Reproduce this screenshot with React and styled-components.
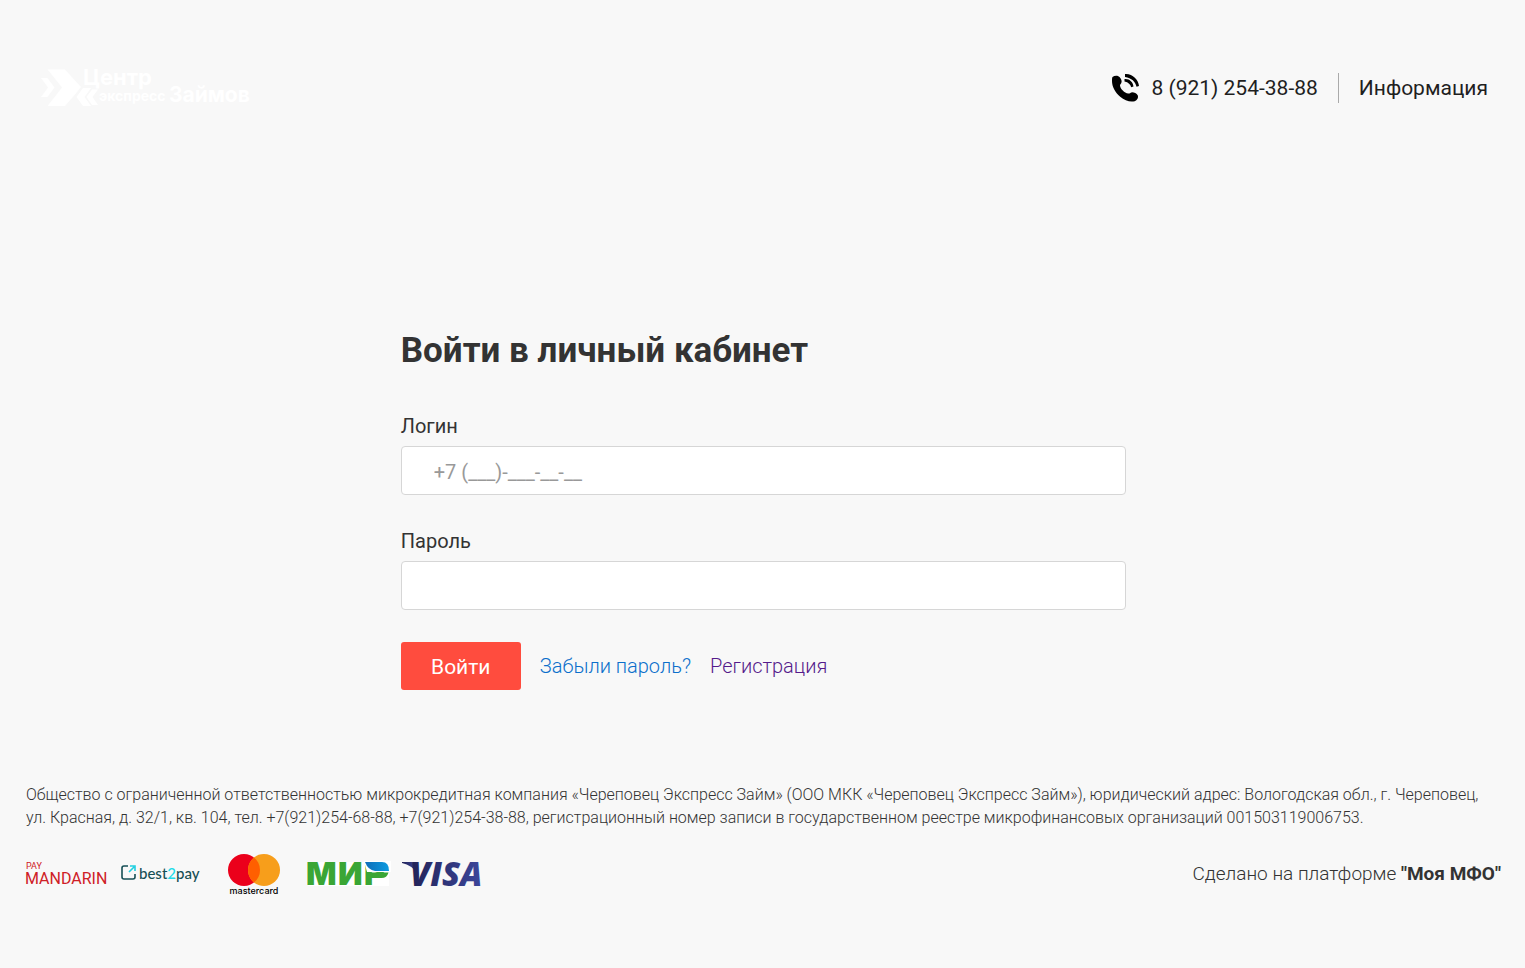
import React, { useState } from 'react'
import styled, { createGlobalStyle } from 'styled-components';

const GlobalStyle = createGlobalStyle`
    :root {
        --bg: #f8f8f8;
        --text: #333;
        --dark: #1f1f1f;
        --link: #0b6fcb;
        --visited: #551a8b;
        --accent: #ff4c3e;
        --border: #d6d6d6;
        --fz-sm: 16px;
        --fz-md: 20px;
        --fz-big: 35px;
    }
    * { box-sizing: border-box; }
    body {
        margin: 0;
        background: var(--bg);
        color: var(--text);
        font-family: Roboto, sans-serif;
        font-size: var(--fz-md);
        font-weight: 300;
    }
    svg {
        display: block;
        overflow: visible;
    }
`;

// Header
const Header = styled.header`
    display: flex;
    align-items: center;
    justify-content: space-between;
    padding: 64px 37px 0 40px;
`;
const LogoLink = styled.a`
    display: block;
    height: 48px;
`;
const HeaderNav = styled.nav`
    display: flex;
    align-items: center;
`;
const HeaderLink = styled.a`
    display: flex;
    align-items: center;
    gap: 12px;
    font-size: 21px;
    font-weight: 400;
    line-height: 30px;
    color: var(--dark);
    text-decoration: none;
    & + & {
        margin-left: 20px;
        padding-left: 20px;
        border-left: 1px solid #aaa;
    }
`;

// Login Form
const Main = styled.main`
    padding: 217px 36px 0 38px;
`;
const LoginForm = styled.form`
    width: 50%;
    margin: 0 auto;
`;
const Title = styled.h1`
    margin: 0 0 39px;
    font-size: var(--fz-big);
    font-weight: 700;
    line-height: 44px;
`;
const LoginBox = styled.div`
    margin-bottom: 32px;
`;
const LoginLabel = styled.label`
    display: block;
    margin-bottom: 6px;
    font-weight: 400;
    line-height: 28px;
`;
const LoginIp = styled.input`
    display: block;
    width: 100%;
    height: 49px;
    border: 1px solid var(--border);
    border-radius: 4px;
    padding: 2px 32px 0;
    background: #fff;
    color: var(--text);
    font: 400 20px Roboto, sans-serif;
    &::placeholder {
        color: #999;
        opacity: 1;
    }
`;
const LoginBottom = styled.div`
    display: flex;
    align-items: center;
    gap: 19px;
`;
const LoginBtn = styled.button`
    width: 120px;
    height: 48px;
    border: 0;
    border-radius: 3px;
    padding: 2px 0 0;
    background: var(--accent);
    color: #fff;
    font: 400 21px Roboto, sans-serif;
    cursor: pointer;
`;
const TextLink = styled.a`
    color: ${({ $visited }) => ($visited ? 'var(--visited)' : 'var(--link)')};
    text-decoration: none;
`;

// Footer
const Footer = styled.footer`
    padding: 93px 24px 64px 26px;
`;
const Legal = styled.p`
    margin: 0 0 25px;
    font-size: var(--fz-sm);
    line-height: 23px;
`;
const FooterBottom = styled.div`
    display: flex;
    align-items: center;
    justify-content: space-between;
`;
const PayList = styled.ul`
    display: flex;
    align-items: center;
    gap: 13px;
    margin: 0;
    padding: 0;
    list-style: none;
`;
const PayItem = styled.li`
    display: flex;
    margin-left: ${({ $wide }) => ($wide ? '14px' : '0')};
    margin-right: ${({ $wide }) => ($wide ? '13px' : '0')};
`;
const Platform = styled.a`
    font-size: 19px;
    line-height: 28px;
    color: inherit;
    text-decoration: none;
    b { font-weight: 700; }
`;

const Logo = () => (
    <svg width='212' height='48' viewBox='0 0 212 48' fill='#fff' role='img' aria-label='Центр экспресс Займов'>
        <path d='M1 14h6.500l7 9.500-7 9.500H1l7-9.500zM7.500 5.500H25L41 23 35.500 30 25 42H7.500L22 23.500z' />
        <path d='M43 24h8l-6.500 9 6.500 9h-8l-6.500-9zM52 25.500h6L52.500 33l5.500 8h-6l-5.500-8z' />
        <g fontFamily='Inter, sans-serif' fontWeight='700'>
            <text x='43' y='21' fontSize='22'>Центр</text>
            <text x='59' y='37' fontSize='14'>экспресс</text>
            <text x='129' y='38' fontSize='21'>Займов</text>
        </g>
    </svg>
)

const PhoneIcon = () => (
    <svg width='27' height='28' viewBox='0 0 27 28' aria-hidden='true'>
        <path d='M.5 3C2.500 1.500 5.500 1.200 7.500 3c1.800 1.800 2.700 4 1.800 6-.6 1.200-1.300 1.600-1.300 2.600.3 3.500 4.500 7.400 8.200 8 1.500.2 2-1 3.300-1.200 2-.3 5.200 1 6.200 2.800 1 2.200-.5 5.200-3 6-4.500 1.200-10-.5-14.500-4.500C3 18.500 0 12.500 0 7c0-1.500 0-3 .5-4z' />
        <path d='M13 0c7-.8 13.500 5.500 14 12l-2.500.8C23.500 7.500 19.500 4 13 3zM12.500 5c5-.5 8.500 3 9 7.500l-2.300.8C18.500 10.500 16.500 8.300 12.500 7.500z' />
    </svg>
)

const Mandarin = () => (
    <svg width='82' height='24' viewBox='0 0 82 24' fill='#cf2026' fontFamily='Roboto, sans-serif' fontWeight='400' role='img' aria-label='Pay Mandarin'>
        <text x='0' y='7' fontSize='9'>PAY</text>
        <text x='-1' y='22' fontSize='16'>MANDARIN</text>
    </svg>
)

const Best2pay = () => (
    <svg width='80' height='22' viewBox='0 0 80 22' fill='#164f55' role='img' aria-label='best2pay'>
        <path d='M7 3H3Q1 3 1 5v9q0 2 2 2h9q2 0 2-2v-3' fill='none' stroke='#164f55' strokeWidth='1.600' />
        <path d='M8 9l5-5M9 3h5v5' fill='none' stroke='#20cfe0' strokeWidth='1.600' />
        <text x='18' y='16' fontSize='15' fontFamily='Lato, sans-serif' fontWeight='500'>
            best<tspan fill='#20dce8'>2</tspan>pay
        </text>
    </svg>
)

const Mastercard = () => (
    <svg width='53' height='40' viewBox='0 0 53 40' role='img' aria-label='mastercard'>
        <circle cx='16' cy='16' r='16' fill='#eb001b' />
        <circle cx='36' cy='16' r='16' fill='#f79e1b' />
        <path d='M26 3.500a16 16 0 0 1 0 25 16 16 0 0 1 0-25z' fill='#ff5f00' />
        <text x='26' y='40' textAnchor='middle' fontSize='9' fontFamily='Inter, sans-serif' fontWeight='500'>mastercard</text>
    </svg>
)

const Mir = () => (
    <svg width='82' height='24' viewBox='0 0 82 24' role='img' aria-label='МИР'>
        <defs>
            <linearGradient id='mirBlue'>
                <stop offset='0' stopColor='#0f6db8' />
                <stop offset='1' stopColor='#0c9be0' />
            </linearGradient>
        </defs>
        <path d='M1 0h81v24H1z' fill='#fff' />
        <text x='-1 31 57' y='23' fontSize='32' fontFamily='Inter, sans-serif' fontWeight='900' fill='#3aa635'>МИР</text>
        <path d='M57 -1h27v11H60z' fill='#fff' />
        <path d='M59 10.500h22.500q-1.500 5.500-7 5.500H59z' fill='#3aa635' />
        <path d='M58 0h17q7 0 7 9H68Q61 8 58 0z' fill='url(#mirBlue)' />
    </svg>
)

const Visa = () => (
    <svg width='80' height='26' viewBox='0 0 80 26' role='img' aria-label='VISA'>
        <defs>
            <linearGradient id='visaBlue'>
                <stop offset='0' stopColor='#222357' />
                <stop offset='1' stopColor='#3c479c' />
            </linearGradient>
        </defs>
        <g fill='url(#visaBlue)'>
            <path d='M0 1h10q3 0 3.500 3l2 9Q10 4 0 2z' />
            <text x='8' y='25' fontSize='33' fontFamily='Open Sans, sans-serif' fontWeight='800' fontStyle='italic'>VISA</text>
        </g>
    </svg>
)

const payments = [
    { id: 'mandarin', logo: <Mandarin /> },
    { id: 'best2pay', logo: <Best2pay /> },
    { id: 'mastercard', logo: <Mastercard />, wide: true },
    { id: 'mir', logo: <Mir /> },
    { id: 'visa', logo: <Visa /> },
]

const App = () => {
    const [ userInfo, setUserInfo ] = useState({
        login: '',
        password: ''
    })
    const handleInput = (key) => (event) => {
        setUserInfo({
            ...userInfo,
            [key]: event.target.value
        })
    }

    return (
        <>
            <GlobalStyle />
            <Header>
                <LogoLink href='#'><Logo /></LogoLink>
                <HeaderNav>
                    <HeaderLink href='tel:+79212543888'><PhoneIcon />8 (921) 254-38-88</HeaderLink>
                    <HeaderLink href='#info'>Информация</HeaderLink>
                </HeaderNav>
            </Header>
            <Main>
                <LoginForm onSubmit={e => e.preventDefault()}>
                    <Title>Войти в личный кабинет</Title>
                    <LoginBox>
                        <LoginLabel htmlFor='login'>Логин</LoginLabel>
                        <LoginIp type='tel' id='login' placeholder='+7 (___)-___-__-__' value={userInfo.login} onChange={handleInput('login')} />
                    </LoginBox>
                    <LoginBox>
                        <LoginLabel htmlFor='password'>Пароль</LoginLabel>
                        <LoginIp type='password' id='password' value={userInfo.password} onChange={handleInput('password')} />
                    </LoginBox>
                    <LoginBottom>
                        <LoginBtn type='submit'>Войти</LoginBtn>
                        <TextLink href='#forgot'>Забыли пароль?</TextLink>
                        <TextLink href='#register' $visited>Регистрация</TextLink>
                    </LoginBottom>
                </LoginForm>
            </Main>
            <Footer>
                <Legal>
                    Общество с ограниченной ответственностью микрокредитная компания «Череповец Экспресс Займ» (ООО МКК «Череповец Экспресс Займ»), юридический адрес: Вологодская обл., г. Череповец, ул. Красная, д. 32/1, кв. 104, тел. +7(921)254-68-88, +7(921)254-38-88, регистрационный номер записи в государственном реестре микрофинансовых организаций 001503119006753.
                </Legal>
                <FooterBottom>
                    <PayList>
                        {payments.map(({ id, logo, wide }) => (
                            <PayItem key={id} $wide={wide}>{logo}</PayItem>
                        ))}
                    </PayList>
                    <Platform href='#platform'>Сделано на платформе <b>"Моя МФО"</b></Platform>
                </FooterBottom>
            </Footer>
        </>
    )
}

export default App
